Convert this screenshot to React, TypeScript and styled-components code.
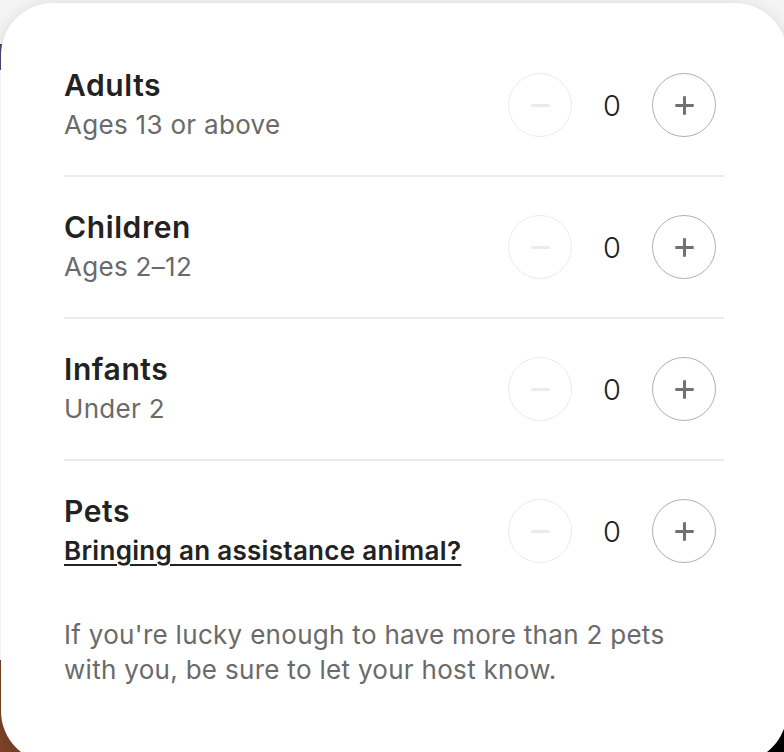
import * as React from "react";
import styled, { createGlobalStyle } from "styled-components";

const GlobalStyle = createGlobalStyle`
    html, body {
        margin: 0;
        padding: 0;
        width: 784px;
        height: 752px;
        overflow: hidden;
    }
    body {
        font-family: "Inter", "Noto Sans", "Liberation Sans", sans-serif;
        background:
            linear-gradient(to bottom, #f4f4f4 0, #f4f4f4 44px, transparent 44px),
            linear-gradient(to bottom, #4b4570 0, #4b4570 70px, #ffffff 70px, #ffffff 660px, transparent 660px),
            linear-gradient(to right, #7b4329 0, #5a2c18 50%, #000 50%);
    }
`;

const Page = styled.div`
    padding: 3px 0 0 1px;
`;

const Card = styled.div`
    width: 786px;
    height: 760px;
    box-sizing: border-box;
    padding: 32px 63px 0 63px;
    background: #fff;
    border-radius: 52px;
    box-shadow: 0 2px 16px rgba(0,0,0,0.12);
`;

const Row = styled.div<{ last?: boolean }>`
    display: flex;
    align-items: center;
    justify-content: space-between;
    padding: 30px 0;
    border-bottom: ${props => props.last ? "none" : "2px solid #ebebeb"};
`;

const Labels = styled.div`
    display: flex;
    flex-direction: column;
`;

const Title = styled.div`
    font-size: 30px;
    line-height: 40px;
    font-weight: 600;
    letter-spacing: 0.6px;
    color: #222;
`;

const Sub = styled.div`
    font-size: 26px;
    line-height: 40px;
    letter-spacing: 0.3px;
    color: #6a6a6a;
`;

const SubLink = styled.a`
    font-size: 26px;
    line-height: 40px;
    font-weight: 600;
    letter-spacing: 0.3px;
    color: #222;
    text-decoration: underline;
    text-decoration-thickness: 2px;
    text-underline-offset: 4px;
    cursor: pointer;
`;

const Stepper = styled.div`
    display: flex;
    align-items: center;
    margin-right: 8px;
`;

const StepButton = styled.button<{ disabled?: boolean }>`
    width: 64px;
    height: 64px;
    border-radius: 50%;
    box-sizing: border-box;
    border: 1.75px solid ${props => props.disabled ? "#ebebeb" : "#b0b0b0"};
    background: #fff;
    color: ${props => props.disabled ? "#ebebeb" : "#717171"};
    display: flex;
    align-items: center;
    justify-content: center;
    padding: 0;
    cursor: ${props => props.disabled ? "not-allowed" : "pointer"};
`;

const Count = styled.span`
    width: 80px;
    text-align: center;
    font-size: 29px;
    font-weight: 300;
    color: #222;
`;

const Note = styled.p`
    margin: 16px 0 0;
    font-size: 26px;
    line-height: 35px;
    letter-spacing: 0.3px;
    color: #6a6a6a;
`;

const MinusIcon = () => (
    <svg width="21" height="21" viewBox="0 0 32 32" fill="none" stroke="currentColor" strokeWidth="4.6">
        <path d="M2 16h28" />
    </svg>
);

const PlusIcon = () => (
    <svg width="21" height="21" viewBox="0 0 32 32" fill="none" stroke="currentColor" strokeWidth="4.6">
        <path d="M2 16h28M16 2v28" />
    </svg>
);

type Guest = { title: string, sub: string, link?: boolean };

const guests: Guest[] = [
    { title: "Adults", sub: "Ages 13 or above" },
    { title: "Children", sub: "Ages 2–12" },
    { title: "Infants", sub: "Under 2" },
    { title: "Pets", sub: "Bringing an assistance animal?", link: true },
];

const GuestRow: (props: { guest: Guest, last: boolean }) => JSX.Element = ({ guest, last }) => {
    const [count, setCount] = React.useState(0);
    return (
        <Row last={last}>
            <Labels>
                <Title>{guest.title}</Title>
                {guest.link ? <SubLink>{guest.sub}</SubLink> : <Sub>{guest.sub}</Sub>}
            </Labels>
            <Stepper>
                <StepButton disabled={count === 0} onClick={() => setCount(c => Math.max(0, c - 1))}>
                    <MinusIcon />
                </StepButton>
                <Count>{count}</Count>
                <StepButton onClick={() => setCount(c => c + 1)}>
                    <PlusIcon />
                </StepButton>
            </Stepper>
        </Row>
    );
};

export default function App() {
    return (
        <Page>
            <GlobalStyle />
            <Card>
                {guests.map((g, i) => (
                    <GuestRow key={g.title} guest={g} last={i === guests.length - 1} />
                ))}
                <Note>
                    If you're lucky enough to have more than 2 pets<br />
                    with you, be sure to let your host know.
                </Note>
            </Card>
        </Page>
    );
}
